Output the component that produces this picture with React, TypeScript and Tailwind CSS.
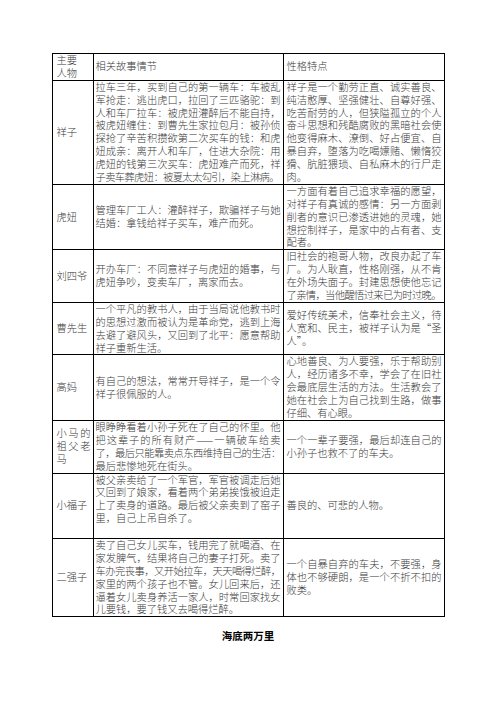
import clsx from 'clsx';

type Row = { name: string[]; story: string[]; trait: string[] };

// each cell is written line by line, as in the printed page
const rows: Row[] = [
    {
        name: ['祥子'],
        story: [
            '拉车三年，买到自己的第一辆车：车被乱',
            '军抢走：逃出虎口，拉回了三匹骆驼：到',
            '人和车厂拉车：被虎妞灌醉后不能自持，',
            '被虎妞缠住：到曹先生家拉包月：被孙侦',
            '探抢了辛苦积攒欲第二次买车的钱：和虎',
            '妞成亲：离开人和车厂，住进大杂院：用',
            '虎妞的钱第三次买车：虎妞难产而死，祥',
            '子卖车葬虎妞：被夏太太勾引，染上淋病。',
        ],
        trait: [
            '祥子是一个勤劳正直、诚实善良、',
            '纯洁憨厚、坚强健壮、自尊好强、',
            '吃苦耐劳的人，但狭隘孤立的个人',
            '奋斗思想和残酷腐败的黑暗社会使',
            '他变得麻木、潦倒、好占便宜、自',
            '暴自弃，堕落为吃喝嫖赌、懒惰狡',
            '猾、肮脏猥琐、自私麻木的行尸走',
            '肉。',
        ],
    },
    {
        name: ['虎妞'],
        story: ['管理车厂工人：灌醉祥子，欺骗祥子与她', '结婚：拿钱给祥子买车，难产而死。'],
        trait: [
            '一方面有着自己追求幸福的愿望，',
            '对祥子有真诚的感情：另一方面剥',
            '削者的意识已渗透进她的灵魂，她',
            '想控制祥子，是家中的占有者、支',
            '配者。',
        ],
    },
    {
        name: ['刘四爷'],
        story: ['开办车厂：不同意祥子与虎妞的婚事，与', '虎妞争吵，变卖车厂，离家而去。'],
        trait: [
            '旧社会的袍哥人物，改良办起了车',
            '厂。为人耿直，性格刚强，从不肯',
            '在外场失面子。封建思想使他忘记',
            '了亲情，当他醒悟过来已为时过晚。',
        ],
    },
    {
        name: ['曹先生'],
        story: [
            '一个平凡的教书人，由于当局说他教书时',
            '的思想过激而被认为是革命党，逃到上海',
            '去避了避风头，又回到了北平：愿意帮助',
            '祥子重新生活。',
        ],
        trait: ['爱好传统美术，信奉社会主义，待', '人宽和、民主，被祥子认为是“圣', '人”。'],
    },
    {
        name: ['高妈'],
        story: ['有自己的想法，常常开导祥子，是一个令', '祥子很佩服的人。'],
        trait: [
            '心地善良、为人要强，乐于帮助别',
            '人，经历诸多不幸，学会了在旧社',
            '会最底层生活的方法。生活教会了',
            '她在社会上为自己找到生路，做事',
            '仔细、有心眼。',
        ],
    },
    {
        name: ['小马的', '祖父老', '马'],
        story: [
            '眼睁睁看着小孙子死在了自己的怀里。他',
            '把这辈子的所有财产——一辆破车给卖',
            '了，最后只能靠卖点东西维持自己的生活：',
            '最后悲惨地死在街头。',
        ],
        trait: ['一个一辈子要强，最后却连自己的', '小孙子也救不了的车夫。'],
    },
    {
        name: ['小福子'],
        story: [
            '被父亲卖给了一个军官，军官被调走后她',
            '又回到了娘家，看着两个弟弟挨饿被迫走',
            '上了卖身的道路。最后被父亲卖到了窑子',
            '里，自己上吊自杀了。',
            '',
        ],
        trait: ['善良的、可悲的人物。'],
    },
    {
        name: ['二强子'],
        story: [
            '卖了自己女儿买车，钱用完了就喝酒、在',
            '家发脾气，结果将自己的妻子打死。卖了',
            '车办完丧事，又开始拉车，天天喝得烂醉，',
            '家里的两个孩子也不管。女儿回来后，还',
            '逼着女儿卖身养活一家人，时常回家找女',
            '儿要钱，要了钱又去喝得烂醉。',
        ],
        trait: ['一个自暴自弃的车夫，不要强，身', '体也不够硬朗，是一个不折不扣的', '败类。'],
    },
];

function Lines({ lines, cap }: { lines: string[]; cap: number }) {
    return (
        <>
            {lines.map((line, i) => (
                <div
                    key={i}
                    className={clsx(
                        'whitespace-nowrap h-[12.9px]',
                        i < lines.length - 1 && line.length >= cap * 0.9 && 'text-justify [text-align-last:justify]',
                        line.length > cap && 'tracking-[-0.6px]'
                    )}
                >
                    {line || '\u00a0'}
                </div>
            ))}
        </>
    );
}

export default function App() {
    return (
        <div className="w-[496px] min-h-[702px] bg-white pt-[53px] font-['Noto_Sans_CJK_SC',sans-serif] font-light text-[10.25px] leading-[12.9px] text-[#3a3a3a]">
            <table className="mx-auto w-[392px] table-fixed border-collapse">
                <colgroup>
                    <col className="w-[41px]" />
                    <col className="w-[190px]" />
                    <col className="w-[161px]" />
                </colgroup>
                <tbody>
                    <tr>
                        <td className="border border-black pl-[4px] pr-[2px] align-middle">
                            <Lines lines={['主要', '人物']} cap={3} />
                        </td>
                        <td className="border border-black px-[2px] align-middle">
                            <Lines lines={['相关故事情节']} cap={18} />
                        </td>
                        <td className="border border-black pl-[3px] pr-[2px] align-middle">
                            <Lines lines={['性格特点']} cap={15} />
                        </td>
                    </tr>
                    {rows.map((r) => (
                        <tr key={r.name.join('')}>
                            <td className="border border-black pl-[4px] pr-[2px] align-middle">
                                <Lines lines={r.name} cap={3} />
                            </td>
                            <td className="border border-black px-[2px] align-middle">
                                <Lines lines={r.story} cap={18} />
                            </td>
                            <td className="border border-black pl-[3px] pr-[2px] align-middle">
                                <Lines lines={r.trait} cap={15} />
                            </td>
                        </tr>
                    ))}
                </tbody>
            </table>

            {/* next section title */}
            <div className="mt-[13px] text-center text-[10.5px] font-bold text-black">海底两万里</div>
        </div>
    );
}
